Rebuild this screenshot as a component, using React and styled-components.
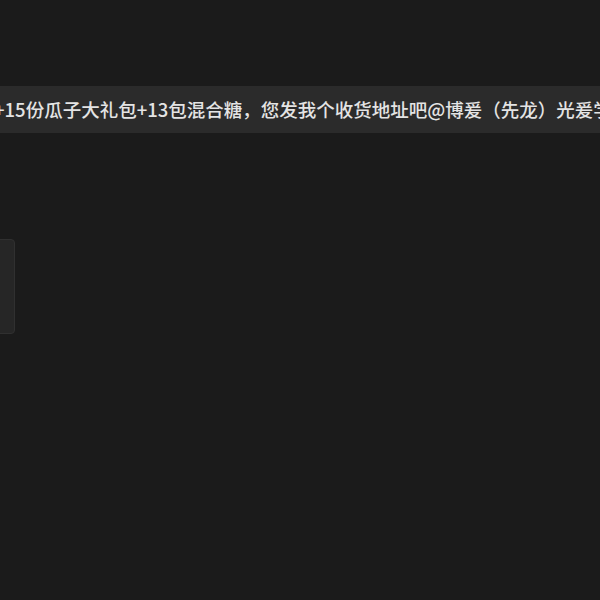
import React from 'react';
import styled, { createGlobalStyle } from 'styled-components';

const GlobalStyle = createGlobalStyle`
  html, body {
    margin: 0;
    padding: 0;
    background: #1b1b1b;
  }
  body {
    font-family: "Noto Sans CJK SC", "Noto Sans", sans-serif;
    overflow: hidden;
  }
`;

const Page = styled.div`
  width: 600px;
  height: 600px;
  background: #1b1b1b;
  padding-top: 86px;
  box-sizing: border-box;
  overflow: hidden;
`;

const Bubble = styled.div`
  display: flex;
  align-items: center;
  height: 47px;
  background: #2b2b2b;
  overflow: hidden;
`;

const BubbleText = styled.span`
  margin-left: -6px;
  white-space: nowrap;
  font-size: 18.5px;
  font-weight: 500;
  line-height: 1;
  color: #e4e4e4;
`;

const Card = styled.div`
  margin-top: 106px;
  margin-left: -85px;
  width: 100px;
  height: 95px;
  background: #262626;
  border: 1px solid #303030;
  border-radius: 4px;
  box-sizing: border-box;
`;

export default function App() {
  return (
    <>
      <GlobalStyle />
      <Page>
        <Bubble>
          <BubbleText>
            +15份瓜子大礼包+13包混合糖，您发我个收货地址吧@博爰（先龙）光爰学员
          </BubbleText>
        </Bubble>
        <Card />
      </Page>
    </>
  );
}
